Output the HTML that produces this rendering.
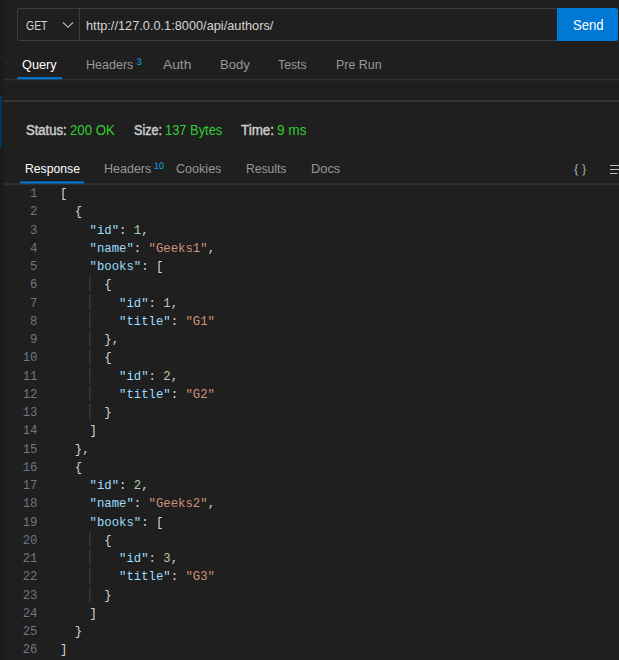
<!DOCTYPE html>
<html><head><meta charset="utf-8">
<style>
*{box-sizing:border-box;margin:0;padding:0}
html,body{width:619px;height:660px;overflow:hidden;background:#1f1f1f}
body{position:relative;font-family:"Liberation Sans",sans-serif;color:#ccc;font-size:13px}
.abs{position:absolute;white-space:nowrap;transform-origin:0 0}
.strip{left:0;top:0;width:2px;height:660px;background:#1b1b1b}
.strip2{left:2px;top:0;width:1px;height:660px;background:#181818}
.stripblue{left:0;top:96px;width:2px;height:51px;background:#04395e}
.stripline{left:0;top:56px;width:2px;height:1px;background:#2d2d2d}
.urlbox{left:17px;top:8px;width:601px;height:32.5px;border:1px solid #3c3c3c;border-radius:2px}
.div{left:79px;top:9px;width:1px;height:31px;background:#3c3c3c}
.t13{top:18px;font-size:13px;line-height:16px}
.c1{color:#d4d4d4}
.sendbg{left:557px;top:8px;width:61px;height:32.5px;background:#0078d4;border-radius:0 3px 3px 0}
.tsend{top:17px;font-size:14px;line-height:16px;color:#fff}
.tab{top:57px;font-size:13px;line-height:16px;color:#989898}
.tab2{top:161px;font-size:13px;line-height:16px;color:#989898}
.act{color:#fff}
.sup{top:58px;font-size:9.6px;text-rendering:geometricPrecision;color:#1aa2ee;line-height:10px}
.sup2{top:162px}
.br{font-size:12.1px;top:160.5px;color:#adadad;text-rendering:geometricPrecision}
.stat{top:122px;font-size:14px;line-height:16px;color:#ccc;-webkit-text-stroke:0.45px #ccc}
.v{color:#32cd32;-webkit-text-stroke:0}
.code{left:0;top:185px;font-family:"Liberation Mono",monospace;font-size:12.3px;line-height:18.25px;color:#d4d4d4}
.ln{position:absolute;left:0;width:37.5px;text-align:right;color:#6e7681}
.row{position:relative;height:18.25px}
.tx{position:absolute;left:60px;white-space:pre}
.k{color:#9cdcfe}.s{color:#ce9178}.n{color:#b5cea8}
</style></head><body>
<div class="abs strip"></div><div class="abs strip2"></div><div class="abs stripline"></div><div class="abs stripblue"></div>
<div class="abs urlbox"></div><div class="abs div"></div>
<svg class="abs" style="left:61.6px;top:21px" width="12" height="8" viewBox="0 0 12 8"><path d="M1 1.3 L6 6.3 L11 1.3" fill="none" stroke="#c8c8c8" stroke-width="1.1"/></svg>
<div class="abs sendbg"></div>
<svg class="abs" style="left:609px;top:164px" width="10" height="10" viewBox="0 0 10 10"><path d="M1 1.5H10M1 5.5H10M1 9.5H8.5" stroke="#bbb" stroke-width="1.2"/></svg>
<svg class="abs" style="left:0;top:0" width="619" height="660" viewBox="0 0 619 660">
<rect x="3" y="79.2" width="617" height="1.1" fill="#353535"/>
<rect x="17.4" y="77.1" width="44.5" height="2.2" fill="#0078d4"/>
<rect x="3" y="99.9" width="617" height="2" fill="#363636"/>
<rect x="3" y="183.4" width="617" height="1.3" fill="#383838"/>
<rect x="20.3" y="181.4" width="63.4" height="2.1" fill="#0078d4"/>
<rect x="89.3" y="276.25" width="1.1" height="15.5" fill="#424242"/>
<rect x="89.3" y="294.50" width="1.1" height="15.5" fill="#424242"/>
<rect x="89.3" y="312.75" width="1.1" height="15.5" fill="#424242"/>
<rect x="89.3" y="331.00" width="1.1" height="15.5" fill="#424242"/>
<rect x="89.3" y="349.25" width="1.1" height="15.5" fill="#424242"/>
<rect x="89.3" y="367.50" width="1.1" height="15.5" fill="#424242"/>
<rect x="89.3" y="385.75" width="1.1" height="15.5" fill="#424242"/>
<rect x="89.3" y="404.00" width="1.1" height="15.5" fill="#424242"/>
<rect x="89.3" y="531.75" width="1.1" height="15.5" fill="#424242"/>
<rect x="89.3" y="550.00" width="1.1" height="15.5" fill="#424242"/>
<rect x="89.3" y="568.25" width="1.1" height="15.5" fill="#424242"/>
<rect x="89.3" y="586.50" width="1.1" height="15.5" fill="#424242"/>
</svg>
<div id="get" class="abs t13 c1" style="left:25.93px;transform:scaleX(0.8043)">GET</div>
<div id="url" class="abs t13 c1" style="left:86.01px;transform:scaleX(0.9820)">http://127.0.0.1:8000/api/authors/</div>
<div id="send" class="abs tsend" style="left:572.78px;transform:scaleX(0.9364)">Send</div>
<div id="q" class="abs tab act" style="left:21.97px;transform:scaleX(0.9780)">Query</div>
<div id="h1" class="abs tab" style="left:86.10px;transform:scaleX(0.9644)">Headers</div>
<div id="s1" class="abs sup" style="left:136.38px;transform:scaleX(1.0000)">3</div>
<div id="au" class="abs tab" style="left:162.70px;transform:scaleX(1.0612)">Auth</div>
<div id="bo" class="abs tab" style="left:219.66px;transform:scaleX(1.0035)">Body</div>
<div id="te" class="abs tab" style="left:278.34px;transform:scaleX(0.9440)">Tests</div>
<div id="pr" class="abs tab" style="left:335.66px;transform:scaleX(0.9553)">Pre Run</div>
<div id="st" class="abs stat" style="left:26.28px;transform:scaleX(0.9336)">Status:</div>
<div id="stv" class="abs stat v" style="left:70.08px;transform:scaleX(0.9446)">200 OK</div>
<div id="sz" class="abs stat" style="left:133.66px;transform:scaleX(0.8972)">Size:</div>
<div id="szv" class="abs stat v" style="left:164.81px;transform:scaleX(0.9193)">137 Bytes</div>
<div id="tm" class="abs stat" style="left:240.90px;transform:scaleX(0.9550)">Time:</div>
<div id="tmv" class="abs stat v" style="left:277.01px;transform:scaleX(0.9738)">9 ms</div>
<div id="re" class="abs tab2 act" style="left:24.77px;transform:scaleX(0.9381)">Response</div>
<div id="h2" class="abs tab2" style="left:104.26px;transform:scaleX(0.9623)">Headers</div>
<div id="s2" class="abs sup sup2" style="left:154.23px;transform:scaleX(0.9175)">10</div>
<div id="co" class="abs tab2" style="left:175.77px;transform:scaleX(0.9667)">Cookies</div>
<div id="rs" class="abs tab2" style="left:246.03px;transform:scaleX(0.9317)">Results</div>
<div id="do" class="abs tab2" style="left:310.95px;transform:scaleX(0.9857)">Docs</div>
<div id="br" class="abs tab2 br" style="left:574.30px;transform:scaleX(1.0700)">{ }</div>
<div class="abs code" id="code">
<div class="row"><span class="ln">1</span><span class="tx">[</span></div>
<div class="row"><span class="ln">2</span><span class="tx">  {</span></div>
<div class="row"><span class="ln">3</span><span class="tx">    <span class="k">"id"</span>: <span class="n">1</span>,</span></div>
<div class="row"><span class="ln">4</span><span class="tx">    <span class="k">"name"</span>: <span class="s">"Geeks1"</span>,</span></div>
<div class="row"><span class="ln">5</span><span class="tx">    <span class="k">"books"</span>: [</span></div>
<div class="row"><span class="ln">6</span><span class="tx">      {</span></div>
<div class="row"><span class="ln">7</span><span class="tx">        <span class="k">"id"</span>: <span class="n">1</span>,</span></div>
<div class="row"><span class="ln">8</span><span class="tx">        <span class="k">"title"</span>: <span class="s">"G1"</span></span></div>
<div class="row"><span class="ln">9</span><span class="tx">      },</span></div>
<div class="row"><span class="ln">10</span><span class="tx">      {</span></div>
<div class="row"><span class="ln">11</span><span class="tx">        <span class="k">"id"</span>: <span class="n">2</span>,</span></div>
<div class="row"><span class="ln">12</span><span class="tx">        <span class="k">"title"</span>: <span class="s">"G2"</span></span></div>
<div class="row"><span class="ln">13</span><span class="tx">      }</span></div>
<div class="row"><span class="ln">14</span><span class="tx">    ]</span></div>
<div class="row"><span class="ln">15</span><span class="tx">  },</span></div>
<div class="row"><span class="ln">16</span><span class="tx">  {</span></div>
<div class="row"><span class="ln">17</span><span class="tx">    <span class="k">"id"</span>: <span class="n">2</span>,</span></div>
<div class="row"><span class="ln">18</span><span class="tx">    <span class="k">"name"</span>: <span class="s">"Geeks2"</span>,</span></div>
<div class="row"><span class="ln">19</span><span class="tx">    <span class="k">"books"</span>: [</span></div>
<div class="row"><span class="ln">20</span><span class="tx">      {</span></div>
<div class="row"><span class="ln">21</span><span class="tx">        <span class="k">"id"</span>: <span class="n">3</span>,</span></div>
<div class="row"><span class="ln">22</span><span class="tx">        <span class="k">"title"</span>: <span class="s">"G3"</span></span></div>
<div class="row"><span class="ln">23</span><span class="tx">      }</span></div>
<div class="row"><span class="ln">24</span><span class="tx">    ]</span></div>
<div class="row"><span class="ln">25</span><span class="tx">  }</span></div>
<div class="row"><span class="ln">26</span><span class="tx">]</span></div>
</div>
</body></html>
